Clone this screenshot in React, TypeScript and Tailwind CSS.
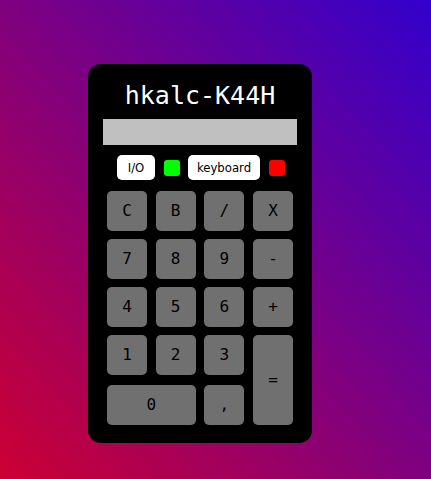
const KEYS: { label: string; cls?: string }[] = [
  { label: "C" }, { label: "B" }, { label: "/" }, { label: "X" },
  { label: "7" }, { label: "8" }, { label: "9" }, { label: "-" },
  { label: "4" }, { label: "5" }, { label: "6" }, { label: "+" },
  { label: "1" }, { label: "2" }, { label: "3" }, { label: "=", cls: "row-span-2" },
  { label: "0", cls: "col-span-2 mt-[2px]" }, { label: ",", cls: "mt-[2px]" },
];

export default function App() {
  return (
    <div className="h-[479px] w-full overflow-hidden bg-[linear-gradient(to_top_right,#cc0033,#3300cc)] pt-[64px] pl-[88px]">
      <div className="w-[224px] h-[379px] rounded-[13px] bg-black flex flex-col items-center font-['DejaVu_Sans_Mono',monospace]">
        <h1 className="mt-[15px] text-[25px] leading-[34px] text-white">hkalc-K44H</h1>
        <div className="mt-[6px] w-[194px] h-[26px] bg-[#c0c0c0]" />
        <div className="mt-[10px] ml-[2px] flex items-center h-[25px] font-['DejaVu_Sans_Condensed','DejaVu_Sans',sans-serif] [font-stretch:condensed] text-[13px]">
          <button className="h-[25px] w-[38px] rounded-[5px] bg-white text-black">I/O</button>
          <span className="ml-[9px] w-[16px] h-[16px] rounded-[3px] bg-[#00ff00]" />
          <button className="ml-[8px] h-[25px] w-[72px] rounded-[5px] bg-white text-black">keyboard</button>
          <span className="ml-[9px] w-[16px] h-[16px] rounded-[3px] bg-[#ff0000]" />
        </div>
        <div className="mt-[11px] grid grid-cols-[40px_40px_40px_40px] grid-rows-[40px_40px_40px_40px_42px] gap-x-[8.7px] gap-y-[8px] w-[186px]">
          {KEYS.map((k) => (
            <button
              key={k.label}
              className={`rounded-[5px] bg-[#707070] text-black text-[16px] flex items-center justify-center ${k.cls ?? ""}`}
            >
              {k.label}
            </button>
          ))}
        </div>
      </div>
    </div>
  );
}
